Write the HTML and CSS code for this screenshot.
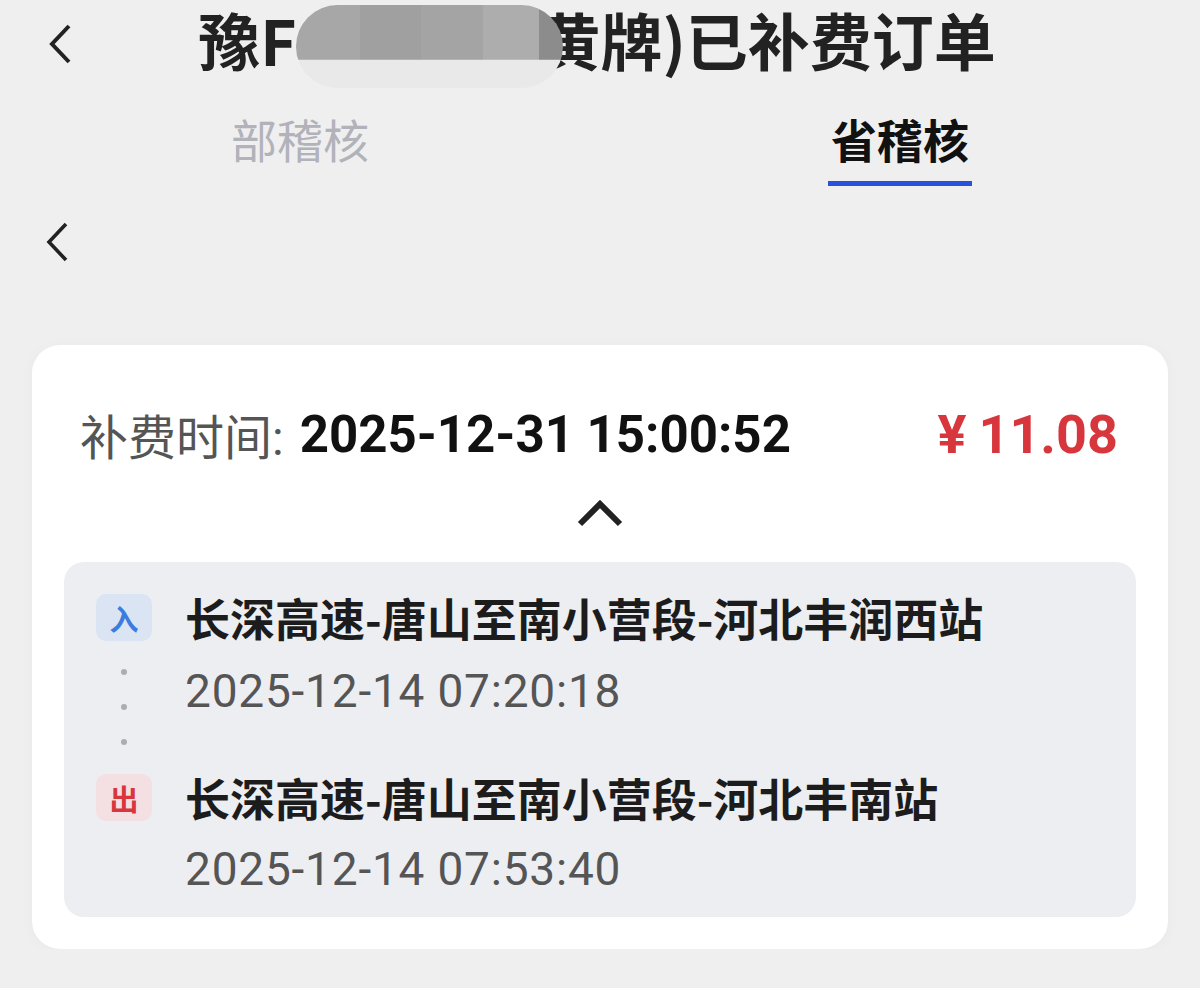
FILE: index.html
```html
<!DOCTYPE html>
<html lang="zh-CN">
<head>
  <meta charset="UTF-8">
  <meta name="viewport" content="width=device-width, initial-scale=1.0">
  <title>已补费订单</title>
  <link rel="stylesheet" href="styles.css">
</head>
<body>
  <header class="topbar">
    <button class="back" aria-label="返回">
      <svg width="24" height="40" viewBox="0 0 24 40"><polyline points="21,2 4,20 21,38" /></svg>
    </button>
    <h1 class="title">豫F<span class="mask"></span>黄牌)已补费订单</h1>
    <span></span>
  </header>

  <nav class="tabs">
    <div class="tab"><span class="tab-label">部稽核</span></div>
    <div class="tab active"><span class="tab-label">省稽核</span></div>
  </nav>

  <div class="subbar">
    <button class="back" aria-label="返回">
      <svg width="24" height="40" viewBox="0 0 24 40"><polyline points="20,2 3,20 20,38" /></svg>
    </button>
  </div>

  <section class="card">
    <div class="summary">
      <div class="paid-time">
        <span class="label">补费时间:</span>
        <span class="value">2025-12-31 15:00:52</span>
      </div>
      <div class="amount"><span class="yen">¥</span>11.08</div>
    </div>

    <div class="toggle">
      <svg width="48" height="28" viewBox="0 0 48 28"><polyline points="4,25 24,5 44,25" /></svg>
    </div>

    <div class="trip">
      <span class="badge in">入</span>
      <div class="station">长深高速-唐山至南小营段-河北丰润西站</div>

      <div class="dots"><i></i><i></i><i></i></div>
      <div class="time first">2025-12-14 07:20:18</div>

      <span class="badge out">出</span>
      <div class="station">长深高速-唐山至南小营段-河北丰南站</div>

      <span></span>
      <div class="time last">2025-12-14 07:53:40</div>
    </div>
  </section>
</body>
</html>
```

FILE: styles.css
```css
:root {
  --bg: #efeff0;
  --text: #1c1c1c;
  --muted: #555555;
  --tab-muted: #b2b2bb;
  --blue: #2a52d8;
  --red: #d8363d;
  --box: #eceef2;
  --font-cjk: "Noto Sans CJK SC", sans-serif;
  --font-num: Roboto, "Noto Sans CJK SC", sans-serif;
}

*, *::before, *::after {
  box-sizing: border-box;
}

body {
  margin: 0;
  background-color: var(--bg);
  color: var(--text);
  font-family: var(--font-cjk);
}

button.back {
  display: block;
  justify-self: start;
  padding: 0;
  border: none;
  background: none;
  cursor: pointer;
}
.back svg {
  display: block;
}
.back svg polyline {
  fill: none;
  stroke: #222;
  stroke-width: 4;
}

/* barra superior */
.topbar {
  display: grid;
  grid-template-columns: 1fr auto 1fr;
  align-items: center;
  height: 80px;
  padding: 0 48px;
}

.title {
  display: flex;
  align-items: flex-start;
  margin: 0 0 0 -6px;
  font-size: 62px;
  line-height: 78px;
  font-weight: 700;
  color: #222;
  white-space: nowrap;
}

.mask {
  position: relative;
  z-index: 1;
  width: 267px;
  height: 83px;
  margin: 5px -25px 0 0;
  border-radius: 42px;
  background:
    linear-gradient(to right, #a7a7a7 0 24%, #a0a0a0 24% 47%, #a4a4a4 47% 70%, #adadad 70% 91%, #8c8c8c 91%) top / 100% 66% no-repeat,
    #e9e9e9;
}

/* abas */
.tabs {
  display: flex;
  margin-top: 30px;
}
.tab {
  flex: 1;
  text-align: center;
}
.tab-label {
  display: inline-block;
  padding: 0 3px 15px;
  border-bottom: 5px solid transparent;
  font-size: 46px;
  line-height: 56px;
  color: var(--tab-muted);
}
.tab.active .tab-label {
  color: #111;
  font-weight: 700;
  border-bottom-color: var(--blue);
}

.subbar {
  height: 40px;
  margin-top: 36px;
  padding-left: 46px;
}
.subbar .back svg polyline {
  stroke-width: 3.6;
}

/* cartão */
.card {
  margin: 83px 32px 0;
  padding: 0 32px 32px;
  background: #fff;
  border-radius: 28px;
  box-shadow: 0 2px 14px rgba(0, 0, 0, 0.03);
}

.summary {
  display: flex;
  align-items: center;
  justify-content: space-between;
  height: 56px;
  padding: 0 18px 0 16px;
  position: relative;
  top: 61px;
}
.paid-time {
  display: flex;
  align-items: center;
  gap: 16px;
}
.label {
  font-family: var(--font-num);
  font-size: 48px;
  color: var(--muted);
}
.value {
  font-family: var(--font-num);
  font-size: 51px;
  font-weight: 700;
  color: #111;
}
.amount {
  font-family: var(--font-num);
  font-size: 54px;
  font-weight: 700;
  color: var(--red);
}
.yen {
  margin-right: 12px;
}

.toggle {
  display: flex;
  justify-content: center;
  height: 28px;
  margin: 98px 0 35px;
}
.toggle polyline {
  fill: none;
  stroke: #222;
  stroke-width: 6;
}

/* trajeto */
.trip {
  display: grid;
  grid-template-columns: 56px 1fr;
  column-gap: 33px;
  padding: 32px 32px 24px;
  background: var(--box);
  border-radius: 20px;
}

.badge {
  display: flex;
  align-items: center;
  justify-content: center;
  width: 56px;
  height: 47px;
  border-radius: 10px;
  font-size: 29px;
  font-weight: 700;
}
.badge.in {
  background: #dbe4f2;
  color: #3c7ce0;
}
.badge.out {
  background: #f4dfe3;
  color: var(--red);
}

.station {
  font-size: 45px;
  line-height: 47px;
  font-weight: 700;
  color: var(--text);
  white-space: nowrap;
}

.time {
  font-family: var(--font-num);
  font-size: 46px;
  line-height: 48px;
  letter-spacing: 0.8px;
  color: var(--muted);
}
.time.first {
  padding: 26px 0 59px;
}
.time.last {
  padding-top: 24px;
}

.dots {
  display: flex;
  flex-direction: column;
  align-items: center;
  gap: 29px;
  padding-top: 28px;
}
.dots i {
  width: 6px;
  height: 6px;
  border-radius: 50%;
  background: #adadb0;
}
```
